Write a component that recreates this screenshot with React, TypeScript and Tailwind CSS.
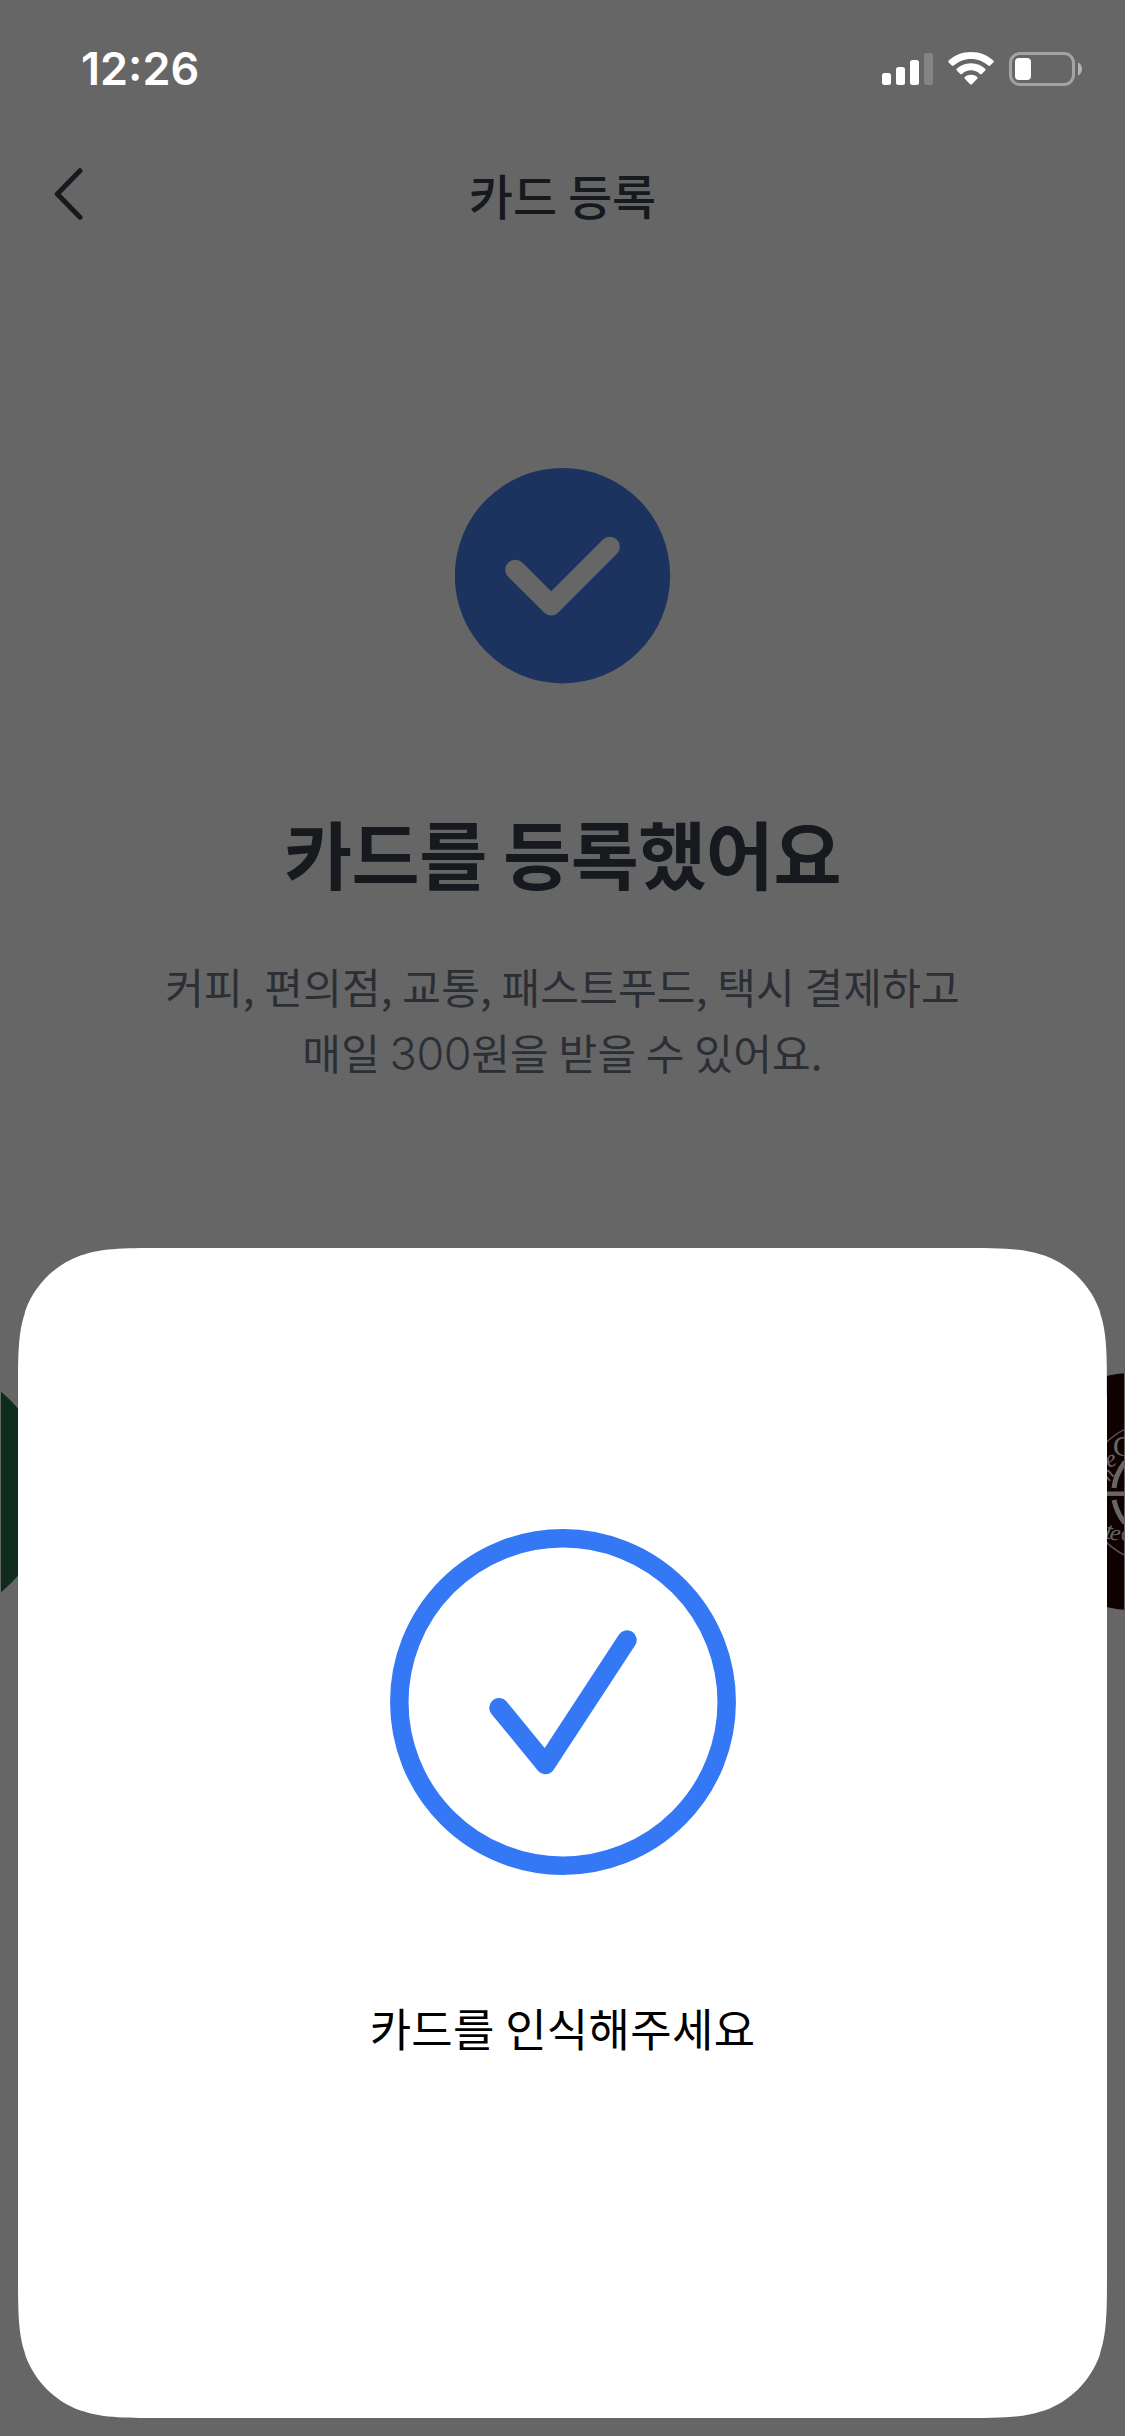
import React from 'react';

function SignalIcon() {
  return (
    <svg width="51" height="32" viewBox="0 0 51 32" fill="#fff">
      <rect x="0" y="20" width="9" height="12" rx="2.5" />
      <rect x="14" y="14" width="9" height="18" rx="2.5" />
      <rect x="28" y="7" width="9" height="25" rx="2.5" />
      <rect x="42" y="0" width="9" height="32" rx="2.5" opacity="0.2" />
    </svg>
  );
}

function WifiIcon() {
  return (
    <svg width="46" height="33" viewBox="0 0 46 33" fill="#fff">
      <path d="M23 0C32 0 39.6 3.4 45.3 8.6Q46.1 9.5 45.3 10.4L42.2 13.6Q41.3 14.4 40.4 13.6C35.7 9.5 29.8 6.9 23 6.9S10.3 9.5 5.6 13.6Q4.7 14.4 3.8 13.6L0.7 10.4Q-0.1 9.5 0.7 8.6C6.4 3.4 14 0 23 0Z" />
      <path d="M23 11.2C28.8 11.2 33.6 13.4 37.2 16.7Q38.1 17.6 37.2 18.5L33.7 21.9Q32.8 22.7 31.9 21.9C29.5 19.7 26.4 18.3 23 18.3S16.5 19.7 14.1 21.9Q13.2 22.7 12.3 21.9L8.8 18.5Q7.9 17.6 8.8 16.7C12.4 13.4 17.2 11.2 23 11.2Z" />
      <path d="M23 22.7C25.5 22.7 27.6 23.5 29.2 24.9Q30 25.8 29.2 26.7L23.9 32.2Q23 33 22.1 32.2L16.8 26.7Q16 25.8 16.8 24.9C18.4 23.5 20.5 22.7 23 22.7Z" />
    </svg>
  );
}

function BatteryIcon() {
  return (
    <svg width="73" height="34" viewBox="0 0 73 34">
      <rect x="1.5" y="1.5" width="63" height="31" rx="9.5" fill="none" stroke="#fff" strokeOpacity="0.4" strokeWidth="3" />
      <rect x="6" y="6" width="16" height="22" rx="4" fill="#fff" />
      <path d="M69 10.5C71.5 11.5 73 14 73 17S71.5 22.5 69 23.5Z" fill="#fff" fillOpacity="0.5" />
    </svg>
  );
}

function StatusBar() {
  return (
    <div className="flex h-[132px] items-start justify-between pl-[81px] pr-[43px] text-white">
      <span className="pt-[42px] font-['Inter',sans-serif] text-[45px] leading-[54px] font-semibold">
        12:26
      </span>
      <div className="flex items-start pt-[52px]">
        <div className="mt-px mr-[15px]"><SignalIcon /></div>
        <div className="mr-[15px]"><WifiIcon /></div>
        <BatteryIcon />
      </div>
    </div>
  );
}

function Header() {
  return (
    <header className="flex h-[132px] items-center justify-between px-[54px] text-[#373f4b]">
      <button aria-label="뒤로" className="-mt-2 w-[60px]">
        <svg width="30" height="52" viewBox="0 0 30 52" fill="none" stroke="currentColor" strokeWidth="5" strokeLinecap="round" strokeLinejoin="round">
          <path d="M26 2.7L3.3 26L26 49.3" />
        </svg>
      </button>
      <h1 className="-mt-2 text-[48px] leading-[72px] font-medium">카드 등록</h1>
      <div className="w-[60px]" />
    </header>
  );
}

// Only the inner edges of the neighbouring brand logos show beside the sheet
function BrandStrip() {
  return (
    <div className="mt-[277px] flex justify-between px-px">
      <svg width="48" height="256" viewBox="0 0 48 256">
        <circle cx="-80.5" cy="128" r="128.5" fill="#266b48" />
      </svg>
      <svg width="48" height="256" viewBox="0 0 48 256" fill="none">
        <circle cx="57" cy="127.5" r="118.5" fill="#280000" />
        <g stroke="#fff">
          <circle cx="78.6" cy="128.3" r="69.4" strokeWidth="1.5" strokeOpacity="0.8" />
          <path d="M20 129.7H48" strokeWidth="4.5" />
          <path d="M38 124C39 114 43 106 49 98" strokeWidth="5" />
          <path d="M38 136C40 145 43 152 49 159" strokeWidth="5" />
        </g>
        <g className="fill-white font-['Liberation_Serif',serif]">
          <text x="37" y="92" fontSize="29">C</text>
          <text x="32" y="104" fontSize="24" fontStyle="italic" transform="rotate(-20 32 104)">e</text>
          <text x="33" y="118" fontSize="20" fontStyle="italic" transform="rotate(-50 33 118)">h</text>
          <text x="28" y="174" fontSize="25" fontStyle="italic" transform="rotate(12 28 174)">t</text>
          <text x="33" y="175" fontSize="23" fontStyle="italic" transform="rotate(12 33 175)">e</text>
          <text x="45" y="177" fontSize="20">o</text>
        </g>
      </svg>
    </div>
  );
}

function CompletePage() {
  return (
    <div className="h-[2436px] bg-white pt-[132px]">
      <Header />
      <main className="flex flex-col items-center pt-[204px] text-center">
        <svg width="216" height="216" viewBox="0 0 216 216" fill="none">
          <circle cx="107.5" cy="107.7" r="107.7" fill="#4880ee" />
          <path d="M60.2 101.7L96.2 137.5L154.8 78.7" stroke="#fff" strokeWidth="20" strokeLinecap="round" strokeLinejoin="round" />
        </svg>
        <h2 className="mt-[114px] text-[74px] leading-[108px] font-bold tracking-[-0.5px] text-[#373f4b]">카드를 등록했어요</h2>
        <p className="mt-[47px] text-[42px] leading-[66px] tracking-[0.2px] text-[#6b7684]">
          커피, 편의점, 교통, 패스트푸드, 택시 결제하고
          <br />
          매일 <span className="font-['Inter',sans-serif] text-[45px] font-[350] tracking-[-0.4px]">300</span>원을 받을 수 있어요.
        </p>
      </main>
      <BrandStrip />
    </div>
  );
}

function ScanSheet() {
  return (
    <section
      className="flex h-[1170px] w-[1089px] flex-col items-center bg-white pt-[281px] text-black [clip-path:path('M151.3_0L937.7_0C981.3_0_1003_0_1022.7_6.5L1026.5_7.4C1052.1_16.7_1072.3_36.9_1081.6_62.5L1082.5_66.3C1089_86_1089_107.8_1089_151.3L1089_1018.7C1089_1062.2_1089_1084_1082.5_1103.7L1081.6_1107.5C1072.3_1133.1_1052.1_1153.3_1026.5_1162.6L1022.7_1163.5C1003_1170_981.3_1170_937.7_1170L151.3_1170C107.7_1170_86_1170_66.3_1163.5L62.5_1162.6C36.9_1153.3_16.7_1133.1_7.4_1107.5L6.5_1103.7C0_1084_0_1062.2_0_1018.7L0_151.3C0_107.8_0_86_6.5_66.3L7.4_62.5C16.7_36.9_36.9_16.7_62.5_7.4L66.3_6.5C86_0_107.7_0_151.3_0Z')]"
    >
      <svg width="346" height="346" viewBox="0 0 346 346" fill="none" stroke="#3478f6" strokeLinecap="round" strokeLinejoin="round">
        <circle cx="173" cy="173" r="163.7" strokeWidth="18.5" />
        <path d="M109 178.7L155.5 235.5L237 111" strokeWidth="19.5" />
      </svg>
      <p className="mt-[120px] text-[45px] leading-[66px] tracking-[0.3px]">카드를 인식해주세요</p>
    </section>
  );
}

export default function App() {
  return (
    <div className="relative h-[2436px] w-[1125px] overflow-hidden font-['Noto_Sans_CJK_KR',sans-serif]">
      <CompletePage />
      <div className="absolute inset-0 flex flex-col items-center justify-between bg-black/60 pb-[18px]">
        <div className="w-full"><StatusBar /></div>
        <ScanSheet />
      </div>
    </div>
  );
}
